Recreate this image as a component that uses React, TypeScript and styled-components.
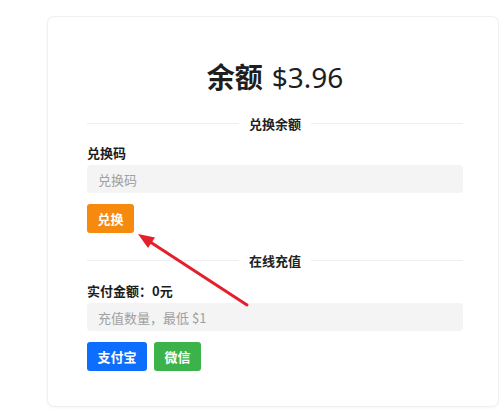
import React from "react";
import styled, { createGlobalStyle } from "styled-components";

const Global = createGlobalStyle`
  html, body { margin: 0; padding: 0; background: #ffffff; }
  body { font-family: "Noto Sans", "Noto Sans CJK SC", sans-serif; color: #222; }
`;

const Page = styled.div`
  padding: 17px 2px 0 48px;
  width: 500px;
  height: 418px;
  box-sizing: border-box;
`;

const Card = styled.div`
  position: relative;
  width: 450px;
  height: 389px;
  box-sizing: border-box;
  padding: 42px 35px 0 39px;
  background: #fff;
  border-radius: 6px;
  box-shadow: 0 0 0 1px #f0f0f0, 0 1px 4px rgba(0, 0, 0, 0.06);
  display: flex;
  flex-direction: column;
`;

const Title = styled.h1`
  margin: 0;
  text-align: center;
  font-size: 28px;
  line-height: 34px;
  font-weight: 400;
  color: #1e1e1e;
`;

const TitleStrong = styled.span`
  font-family: "Noto Sans CJK SC", sans-serif;
  font-weight: 700;
  margin-right: 9px;
`;

const Divider = styled.div<{ $mt: number }>`
  display: flex;
  align-items: center;
  gap: 10px;
  margin-top: ${(p) => p.$mt}px;
  height: 20px;
  font-family: "Noto Sans CJK SC", sans-serif;
  font-size: 13px;
  font-weight: 700;
  color: #222;
  &::before, &::after {
    content: "";
    flex: 1;
    height: 1px;
    background: #eeeeee;
  }
`;

const Label = styled.div<{ $mt: number }>`
  margin-top: ${(p) => p.$mt}px;
  height: 20px;
  line-height: 20px;
  font-family: "Noto Sans CJK SC", sans-serif;
  font-size: 13px;
  font-weight: 700;
  color: #1c1c1c;
`;

const Input = styled.input`
  margin-top: 2px;
  height: 28px;
  box-sizing: border-box;
  border: none;
  outline: none;
  border-radius: 4px;
  background: #f4f4f4;
  padding: 0 11px;
  font-family: "Noto Sans CJK SC", sans-serif;
  font-size: 13px;
  &::placeholder { color: #a0a0a0; }
`;

const ButtonRow = styled.div`
  display: flex;
  gap: 7px;
  margin-top: 11px;
`;

const Button = styled.button<{ $bg: string }>`
  height: 29px;
  padding: 0 10.5px;
  border: none;
  border-radius: 3px;
  background: ${(p) => p.$bg};
  color: #fff;
  font-family: "Noto Sans CJK SC", sans-serif;
  font-size: 13px;
  font-weight: 700;
  line-height: 29px;
`;

const ArrowLayer = styled.svg`
  position: absolute;
  left: 0;
  top: 0;
  width: 450px;
  height: 389px;
  pointer-events: none;
`;

export default function App() {
  return (
    <>
      <Global />
      <Page>
        <Card>
          <Title>
            <TitleStrong>余额</TitleStrong>$3.96
          </Title>
          <Divider $mt={19}>兑换余额</Divider>
          <Label $mt={10}>兑换码</Label>
          <Input placeholder="兑换码" />
          <ButtonRow>
            <Button $bg="#f68a0e">兑换</Button>
          </ButtonRow>
          <Divider $mt={17}>在线充值</Divider>
          <Label $mt={11}>实付金额：0元</Label>
          <Input placeholder="充值数量，最低 $1" />
          <ButtonRow>
            <Button $bg="#0d6efd">支付宝</Button>
            <Button $bg="#3cb24a">微信</Button>
          </ButtonRow>
          <ArrowLayer viewBox="0 0 450 389">
            <line x1="199" y1="288" x2="103" y2="225.5" stroke="#e3202b" strokeWidth="3" strokeLinecap="round" />
            <polygon points="90,217 107,220.5 100,231" fill="#e3202b" />
          </ArrowLayer>
        </Card>
      </Page>
    </>
  );
}
